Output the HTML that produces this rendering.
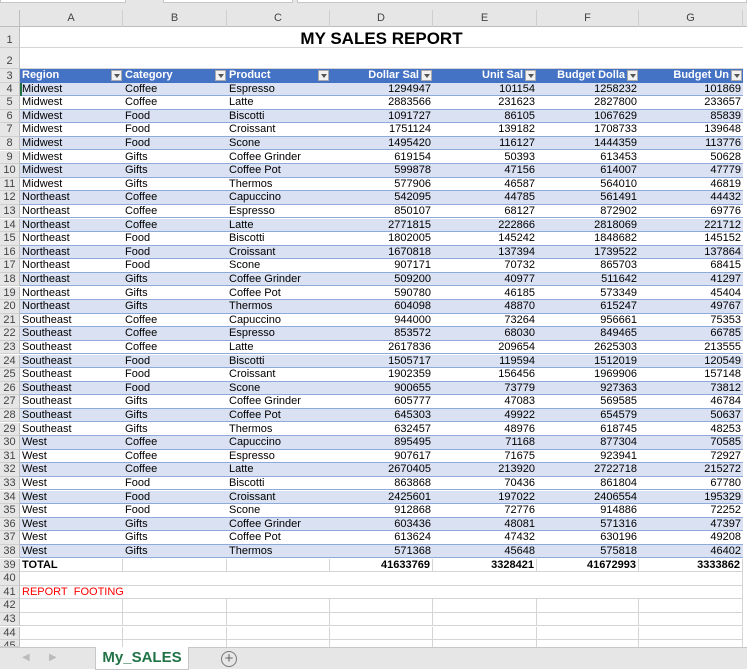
<!DOCTYPE html>
<html><head><meta charset="utf-8"><style>
*{margin:0;padding:0;box-sizing:border-box}
body{width:747px;height:669px;overflow:hidden;background:#fff;font-family:"Liberation Sans",Arial,sans-serif;font-size:11px;color:#000;position:relative}
.top{position:absolute;left:0;top:0;width:747px;height:10px;background:#e6e6e6}
.top div{position:absolute;top:0;height:3px;background:#fff;border:1px solid #c6c6c6;border-top:none}
.ch{position:absolute;top:10px;left:0;width:747px;height:17px;background:#e6e6e6;border-bottom:1px solid #bdbdbd}
.ch span{position:absolute;top:0;height:17px;line-height:17px;text-align:center;color:#444;font-size:11px;border-right:1px solid #cfcfcf}
.rh{position:absolute;left:0;width:20px;background:#e6e6e6;color:#444;text-align:center;border-bottom:1px solid #cfcfcf;border-right:1px solid #bdbdbd;font-size:11px}
.r{position:absolute;left:20px;width:723px;height:13.6px;border-bottom:1px solid #8eaadb;line-height:13px}
.r.b{background:#d9e1f2}
.r span{position:absolute;top:0;white-space:nowrap;overflow:hidden;padding:0 2px}
.a{left:0;width:103px}.bb{left:103px;width:104px}.c{left:207px;width:103px}
.d{left:310px;width:103px;text-align:right}.e{left:413px;width:104px;text-align:right}
.f{left:517px;width:102px;text-align:right}.g{left:619px;width:104px;text-align:right}
.g2{position:absolute;left:20px;width:723px;border-bottom:1px solid #d4d4d4}
.vl span{position:absolute;top:0;bottom:0;border-right:1px solid #d4d4d4}
.hdr{background:#4472c4;color:#fff;font-weight:bold;border-bottom:1px solid #4472c4}
.hdr span i{position:absolute;right:1px;top:1px;width:11px;height:11px;background:#f2f2f2;border:1px solid #aaa}
.hdr span i:after{content:"";position:absolute;left:2px;top:3px;border:3px solid transparent;border-top:4px solid #555}
.hdr .d,.hdr .e,.hdr .f,.hdr .g{padding-right:14px}
.tab{position:absolute;left:0;top:647px;width:747px;height:22px;background:#e6e6e6;border-top:1px solid #c6c6c6}
</style></head><body>
<div class="top"><div style="left:0;width:126px"></div><div style="left:163px;width:130px"></div><div style="left:297px;width:450px"></div></div>
<div class="ch"><span style="left:0;width:20px;border-right:1px solid #bdbdbd"></span><span style="left:20px;width:103px">A</span><span style="left:123px;width:104px">B</span><span style="left:227px;width:103px">C</span><span style="left:330px;width:103px">D</span><span style="left:433px;width:104px">E</span><span style="left:537px;width:102px">F</span><span style="left:639px;width:104px">G</span></div>

<div class="rh" style="top:27px;height:21px;line-height:26px">1</div>
<div class="rh" style="top:48px;height:21px;line-height:26px">2</div>
<div class="rh" style="top:69px;height:13.5px;line-height:14px">3</div>
<div class="g2" style="top:27px;height:21px"></div>
<div class="g2" style="top:48px;height:21px"></div>
<div style="position:absolute;left:20px;top:27px;width:723px;height:21px;text-align:center;font-weight:bold;font-size:17px;line-height:24px">MY SALES REPORT</div>
<div class="r hdr" style="top:69px"><span class="a">Region<i></i></span><span class="bb">Category<i></i></span><span class="c">Product<i></i></span><span class="d">Dollar Sal<i></i></span><span class="e">Unit Sal<i></i></span><span class="f">Budget Dolla<i></i></span><span class="g">Budget Un<i></i></span></div>

<div class="rh" style="top:82.5px;height:13.6px;line-height:13px">4</div><div class="r b" style="top:82.5px"><span class="a">Midwest</span><span class="bb">Coffee</span><span class="c">Espresso</span><span class="d">1294947</span><span class="e">101154</span><span class="f">1258232</span><span class="g">101869</span></div>
<div class="rh" style="top:96.1px;height:13.6px;line-height:13px">5</div><div class="r" style="top:96.1px"><span class="a">Midwest</span><span class="bb">Coffee</span><span class="c">Latte</span><span class="d">2883566</span><span class="e">231623</span><span class="f">2827800</span><span class="g">233657</span></div>
<div class="rh" style="top:109.7px;height:13.6px;line-height:13px">6</div><div class="r b" style="top:109.7px"><span class="a">Midwest</span><span class="bb">Food</span><span class="c">Biscotti</span><span class="d">1091727</span><span class="e">86105</span><span class="f">1067629</span><span class="g">85839</span></div>
<div class="rh" style="top:123.3px;height:13.6px;line-height:13px">7</div><div class="r" style="top:123.3px"><span class="a">Midwest</span><span class="bb">Food</span><span class="c">Croissant</span><span class="d">1751124</span><span class="e">139182</span><span class="f">1708733</span><span class="g">139648</span></div>
<div class="rh" style="top:136.9px;height:13.6px;line-height:13px">8</div><div class="r b" style="top:136.9px"><span class="a">Midwest</span><span class="bb">Food</span><span class="c">Scone</span><span class="d">1495420</span><span class="e">116127</span><span class="f">1444359</span><span class="g">113776</span></div>
<div class="rh" style="top:150.5px;height:13.6px;line-height:13px">9</div><div class="r" style="top:150.5px"><span class="a">Midwest</span><span class="bb">Gifts</span><span class="c">Coffee Grinder</span><span class="d">619154</span><span class="e">50393</span><span class="f">613453</span><span class="g">50628</span></div>
<div class="rh" style="top:164.1px;height:13.6px;line-height:13px">10</div><div class="r b" style="top:164.1px"><span class="a">Midwest</span><span class="bb">Gifts</span><span class="c">Coffee Pot</span><span class="d">599878</span><span class="e">47156</span><span class="f">614007</span><span class="g">47779</span></div>
<div class="rh" style="top:177.7px;height:13.6px;line-height:13px">11</div><div class="r" style="top:177.7px"><span class="a">Midwest</span><span class="bb">Gifts</span><span class="c">Thermos</span><span class="d">577906</span><span class="e">46587</span><span class="f">564010</span><span class="g">46819</span></div>
<div class="rh" style="top:191.3px;height:13.6px;line-height:13px">12</div><div class="r b" style="top:191.3px"><span class="a">Northeast</span><span class="bb">Coffee</span><span class="c">Capuccino</span><span class="d">542095</span><span class="e">44785</span><span class="f">561491</span><span class="g">44432</span></div>
<div class="rh" style="top:204.9px;height:13.6px;line-height:13px">13</div><div class="r" style="top:204.9px"><span class="a">Northeast</span><span class="bb">Coffee</span><span class="c">Espresso</span><span class="d">850107</span><span class="e">68127</span><span class="f">872902</span><span class="g">69776</span></div>
<div class="rh" style="top:218.5px;height:13.6px;line-height:13px">14</div><div class="r b" style="top:218.5px"><span class="a">Northeast</span><span class="bb">Coffee</span><span class="c">Latte</span><span class="d">2771815</span><span class="e">222866</span><span class="f">2818069</span><span class="g">221712</span></div>
<div class="rh" style="top:232.1px;height:13.6px;line-height:13px">15</div><div class="r" style="top:232.1px"><span class="a">Northeast</span><span class="bb">Food</span><span class="c">Biscotti</span><span class="d">1802005</span><span class="e">145242</span><span class="f">1848682</span><span class="g">145152</span></div>
<div class="rh" style="top:245.7px;height:13.6px;line-height:13px">16</div><div class="r b" style="top:245.7px"><span class="a">Northeast</span><span class="bb">Food</span><span class="c">Croissant</span><span class="d">1670818</span><span class="e">137394</span><span class="f">1739522</span><span class="g">137864</span></div>
<div class="rh" style="top:259.3px;height:13.6px;line-height:13px">17</div><div class="r" style="top:259.3px"><span class="a">Northeast</span><span class="bb">Food</span><span class="c">Scone</span><span class="d">907171</span><span class="e">70732</span><span class="f">865703</span><span class="g">68415</span></div>
<div class="rh" style="top:272.9px;height:13.6px;line-height:13px">18</div><div class="r b" style="top:272.9px"><span class="a">Northeast</span><span class="bb">Gifts</span><span class="c">Coffee Grinder</span><span class="d">509200</span><span class="e">40977</span><span class="f">511642</span><span class="g">41297</span></div>
<div class="rh" style="top:286.5px;height:13.6px;line-height:13px">19</div><div class="r" style="top:286.5px"><span class="a">Northeast</span><span class="bb">Gifts</span><span class="c">Coffee Pot</span><span class="d">590780</span><span class="e">46185</span><span class="f">573349</span><span class="g">45404</span></div>
<div class="rh" style="top:300.1px;height:13.6px;line-height:13px">20</div><div class="r b" style="top:300.1px"><span class="a">Northeast</span><span class="bb">Gifts</span><span class="c">Thermos</span><span class="d">604098</span><span class="e">48870</span><span class="f">615247</span><span class="g">49767</span></div>
<div class="rh" style="top:313.7px;height:13.6px;line-height:13px">21</div><div class="r" style="top:313.7px"><span class="a">Southeast</span><span class="bb">Coffee</span><span class="c">Capuccino</span><span class="d">944000</span><span class="e">73264</span><span class="f">956661</span><span class="g">75353</span></div>
<div class="rh" style="top:327.3px;height:13.6px;line-height:13px">22</div><div class="r b" style="top:327.3px"><span class="a">Southeast</span><span class="bb">Coffee</span><span class="c">Espresso</span><span class="d">853572</span><span class="e">68030</span><span class="f">849465</span><span class="g">66785</span></div>
<div class="rh" style="top:340.9px;height:13.6px;line-height:13px">23</div><div class="r" style="top:340.9px"><span class="a">Southeast</span><span class="bb">Coffee</span><span class="c">Latte</span><span class="d">2617836</span><span class="e">209654</span><span class="f">2625303</span><span class="g">213555</span></div>
<div class="rh" style="top:354.5px;height:13.6px;line-height:13px">24</div><div class="r b" style="top:354.5px"><span class="a">Southeast</span><span class="bb">Food</span><span class="c">Biscotti</span><span class="d">1505717</span><span class="e">119594</span><span class="f">1512019</span><span class="g">120549</span></div>
<div class="rh" style="top:368.1px;height:13.6px;line-height:13px">25</div><div class="r" style="top:368.1px"><span class="a">Southeast</span><span class="bb">Food</span><span class="c">Croissant</span><span class="d">1902359</span><span class="e">156456</span><span class="f">1969906</span><span class="g">157148</span></div>
<div class="rh" style="top:381.7px;height:13.6px;line-height:13px">26</div><div class="r b" style="top:381.7px"><span class="a">Southeast</span><span class="bb">Food</span><span class="c">Scone</span><span class="d">900655</span><span class="e">73779</span><span class="f">927363</span><span class="g">73812</span></div>
<div class="rh" style="top:395.3px;height:13.6px;line-height:13px">27</div><div class="r" style="top:395.3px"><span class="a">Southeast</span><span class="bb">Gifts</span><span class="c">Coffee Grinder</span><span class="d">605777</span><span class="e">47083</span><span class="f">569585</span><span class="g">46784</span></div>
<div class="rh" style="top:408.9px;height:13.6px;line-height:13px">28</div><div class="r b" style="top:408.9px"><span class="a">Southeast</span><span class="bb">Gifts</span><span class="c">Coffee Pot</span><span class="d">645303</span><span class="e">49922</span><span class="f">654579</span><span class="g">50637</span></div>
<div class="rh" style="top:422.5px;height:13.6px;line-height:13px">29</div><div class="r" style="top:422.5px"><span class="a">Southeast</span><span class="bb">Gifts</span><span class="c">Thermos</span><span class="d">632457</span><span class="e">48976</span><span class="f">618745</span><span class="g">48253</span></div>
<div class="rh" style="top:436.1px;height:13.6px;line-height:13px">30</div><div class="r b" style="top:436.1px"><span class="a">West</span><span class="bb">Coffee</span><span class="c">Capuccino</span><span class="d">895495</span><span class="e">71168</span><span class="f">877304</span><span class="g">70585</span></div>
<div class="rh" style="top:449.7px;height:13.6px;line-height:13px">31</div><div class="r" style="top:449.7px"><span class="a">West</span><span class="bb">Coffee</span><span class="c">Espresso</span><span class="d">907617</span><span class="e">71675</span><span class="f">923941</span><span class="g">72927</span></div>
<div class="rh" style="top:463.3px;height:13.6px;line-height:13px">32</div><div class="r b" style="top:463.3px"><span class="a">West</span><span class="bb">Coffee</span><span class="c">Latte</span><span class="d">2670405</span><span class="e">213920</span><span class="f">2722718</span><span class="g">215272</span></div>
<div class="rh" style="top:476.9px;height:13.6px;line-height:13px">33</div><div class="r" style="top:476.9px"><span class="a">West</span><span class="bb">Food</span><span class="c">Biscotti</span><span class="d">863868</span><span class="e">70436</span><span class="f">861804</span><span class="g">67780</span></div>
<div class="rh" style="top:490.5px;height:13.6px;line-height:13px">34</div><div class="r b" style="top:490.5px"><span class="a">West</span><span class="bb">Food</span><span class="c">Croissant</span><span class="d">2425601</span><span class="e">197022</span><span class="f">2406554</span><span class="g">195329</span></div>
<div class="rh" style="top:504.1px;height:13.6px;line-height:13px">35</div><div class="r" style="top:504.1px"><span class="a">West</span><span class="bb">Food</span><span class="c">Scone</span><span class="d">912868</span><span class="e">72776</span><span class="f">914886</span><span class="g">72252</span></div>
<div class="rh" style="top:517.7px;height:13.6px;line-height:13px">36</div><div class="r b" style="top:517.7px"><span class="a">West</span><span class="bb">Gifts</span><span class="c">Coffee Grinder</span><span class="d">603436</span><span class="e">48081</span><span class="f">571316</span><span class="g">47397</span></div>
<div class="rh" style="top:531.3px;height:13.6px;line-height:13px">37</div><div class="r" style="top:531.3px"><span class="a">West</span><span class="bb">Gifts</span><span class="c">Coffee Pot</span><span class="d">613624</span><span class="e">47432</span><span class="f">630196</span><span class="g">49208</span></div>
<div class="rh" style="top:544.9px;height:13.6px;line-height:13px">38</div><div class="r b" style="top:544.9px"><span class="a">West</span><span class="bb">Gifts</span><span class="c">Thermos</span><span class="d">571368</span><span class="e">45648</span><span class="f">575818</span><span class="g">46402</span></div>
<div class="rh" style="top:558.5px;height:13.6px;line-height:13px">39</div><div class="r vl" style="top:558.5px;font-weight:bold;border-bottom:1px solid #d4d4d4"><span style="left:0;width:103px"></span><span style="left:0;width:207px"></span><span style="left:0;width:310px"></span><span style="left:0;width:413px"></span><span style="left:0;width:517px"></span><span style="left:0;width:619px"></span><span style="left:0;width:723px"></span><span class="a">TOTAL</span><span class="d">41633769</span><span class="e">3328421</span><span class="f">41672993</span><span class="g">3333862</span></div>
<div class="rh" style="top:572.1px;height:13.6px;line-height:13px">40</div><div class="g2" style="top:572.1px;height:13.6px;border-right:1px solid #d4d4d4"></div>
<div class="rh" style="top:585.7px;height:13.6px;line-height:13px">41</div><div class="g2" style="top:585.7px;height:13.6px;border-right:1px solid #d4d4d4;color:#f00;line-height:13px;padding-left:2px">REPORT&nbsp; FOOTING</div>
<div class="rh" style="top:599.3px;height:13.6px;line-height:13px">42</div><div class="r vl" style="top:599.3px;border-bottom:1px solid #d4d4d4"><span style="left:0;width:103px"></span><span style="left:0;width:207px"></span><span style="left:0;width:310px"></span><span style="left:0;width:413px"></span><span style="left:0;width:517px"></span><span style="left:0;width:619px"></span><span style="left:0;width:723px"></span></div>
<div class="rh" style="top:612.9px;height:13.6px;line-height:13px">43</div><div class="r vl" style="top:612.9px;border-bottom:1px solid #d4d4d4"><span style="left:0;width:103px"></span><span style="left:0;width:207px"></span><span style="left:0;width:310px"></span><span style="left:0;width:413px"></span><span style="left:0;width:517px"></span><span style="left:0;width:619px"></span><span style="left:0;width:723px"></span></div>
<div class="rh" style="top:626.5px;height:13.6px;line-height:13px">44</div><div class="r vl" style="top:626.5px;border-bottom:1px solid #d4d4d4"><span style="left:0;width:103px"></span><span style="left:0;width:207px"></span><span style="left:0;width:310px"></span><span style="left:0;width:413px"></span><span style="left:0;width:517px"></span><span style="left:0;width:619px"></span><span style="left:0;width:723px"></span></div>
<div class="rh" style="top:640.1px;height:7px;line-height:13px;overflow:hidden">45</div><div class="r vl" style="top:640.1px;height:7px;border:none"><span style="left:0;width:103px"></span><span style="left:0;width:207px"></span><span style="left:0;width:310px"></span><span style="left:0;width:413px"></span><span style="left:0;width:517px"></span><span style="left:0;width:619px"></span><span style="left:0;width:723px"></span></div>
<div style="position:absolute;left:20px;top:82.5px;width:2px;height:13.6px;background:#217346"></div>

<div class="tab">
<span style="position:absolute;left:22px;top:4px;color:#bbb;font-size:10px">&#9664;</span>
<span style="position:absolute;left:49px;top:4px;color:#bbb;font-size:10px">&#9654;</span>
<div style="position:absolute;left:95px;top:-1px;width:94px;height:23px;background:#fff;border:1px solid #c6c6c6;border-top:none;text-align:center;color:#217346;font-weight:bold;font-size:15px;line-height:21px">My_SALES</div>
<div style="position:absolute;left:221px;top:3px;width:16px;height:16px;border:1px solid #777;border-radius:50%;text-align:center;line-height:14px;font-size:15px;color:#666">+</div>
</div>
</body></html>
